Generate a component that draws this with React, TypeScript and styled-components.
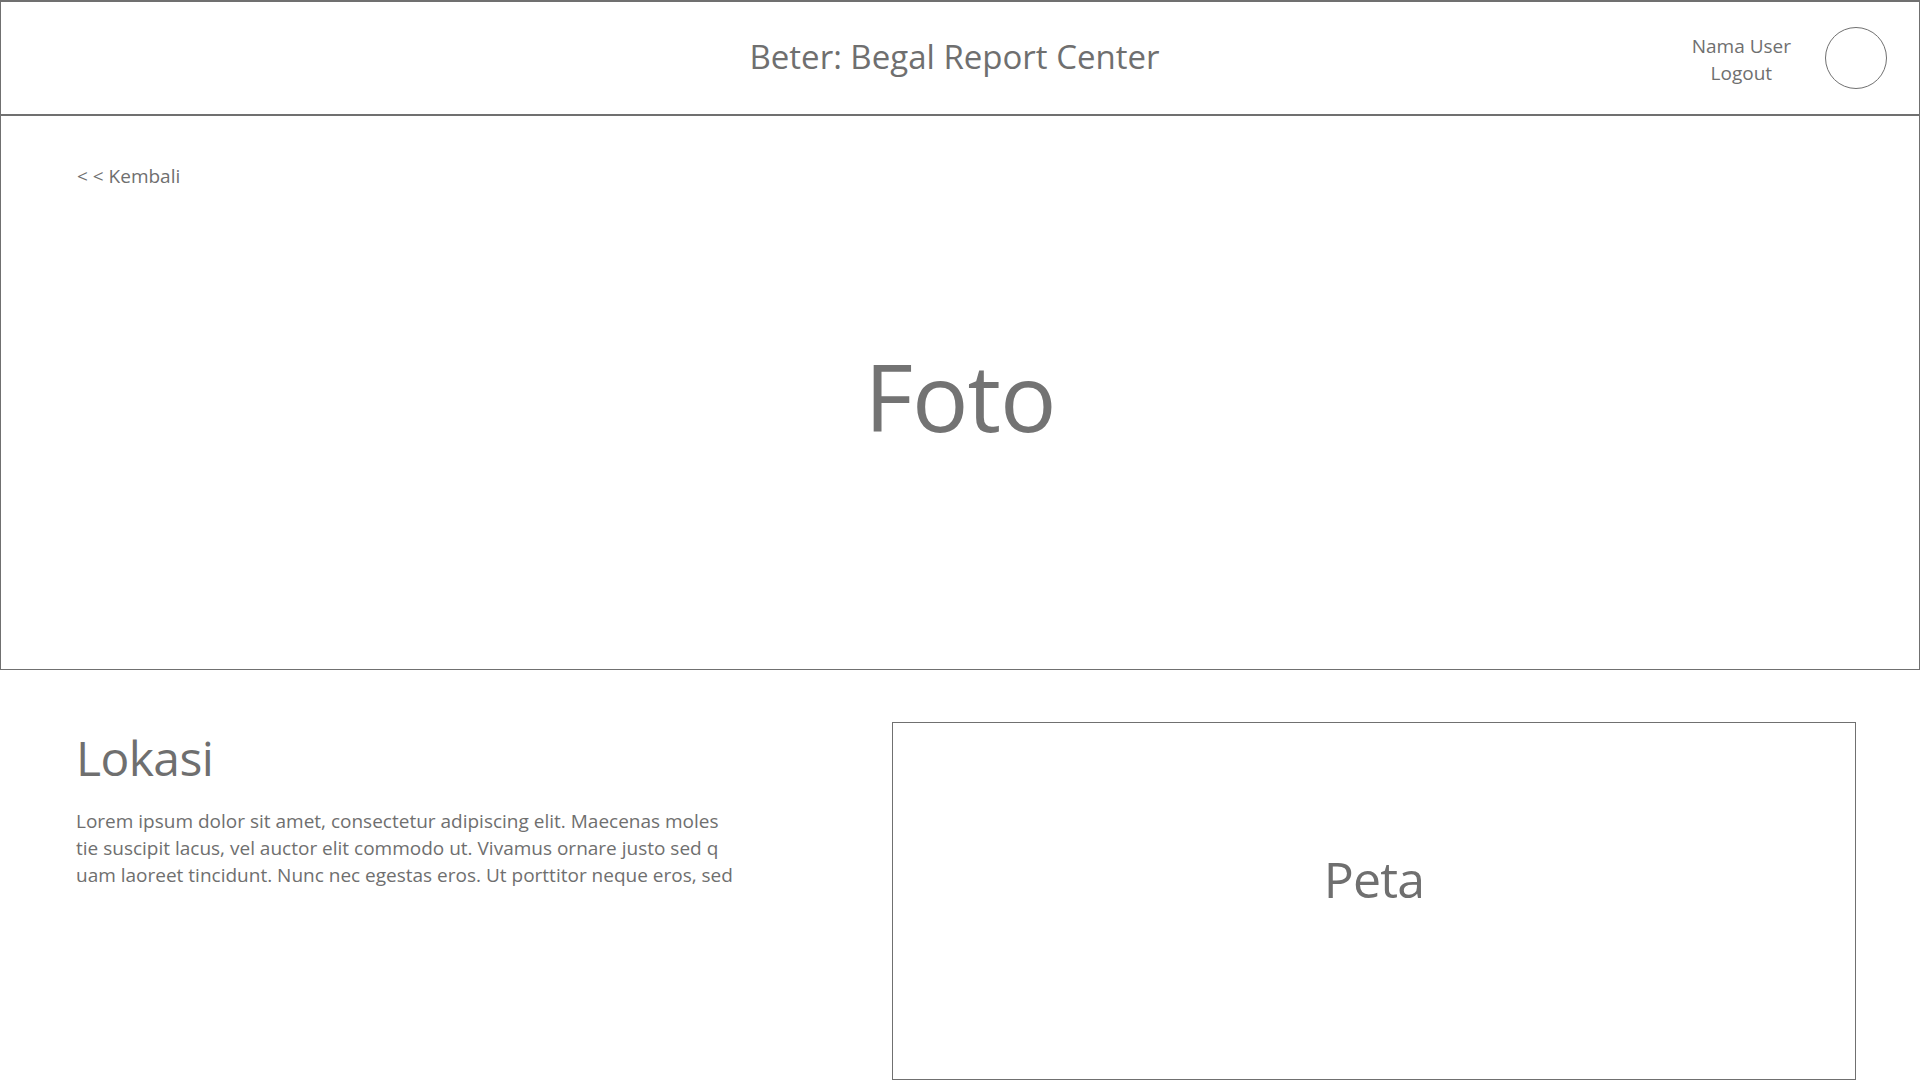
import React, { FC } from "react";
import styled, { createGlobalStyle } from "styled-components";

const ink = "#6f6f6f";
const line = "#707070";

const GlobalStyle = createGlobalStyle`
  html, body {
    margin: 0;
    padding: 0;
    background: #ffffff;
  }

  body {
    font-family: "Open Sans", "Noto Sans", sans-serif;
    color: ${ink};
  }

  * {
    box-sizing: border-box;
  }
`;

const loremLines = [
  "Lorem ipsum dolor sit amet, consectetur adipiscing elit. Maecenas moles",
  "tie suscipit lacus, vel auctor elit commodo ut. Vivamus ornare justo sed q",
  "uam laoreet tincidunt. Nunc nec egestas eros. Ut porttitor neque eros, sed",
];

const App: FC = () => {
  return (
    <Page>
      <GlobalStyle />
      <Header>
        <Title>Beter: Begal Report Center</Title>
        <UserArea>
          <UserLinks>
            <UserLink>Nama User</UserLink>
            <UserLink>Logout</UserLink>
          </UserLinks>
          <Avatar />
        </UserArea>
      </Header>

      <PhotoSection>
        <BackLink href="#">&lt; &lt; Kembali</BackLink>
        <PhotoLabel>Foto</PhotoLabel>
      </PhotoSection>

      <Details>
        <LocationColumn>
          <SectionTitle>Lokasi</SectionTitle>
          <Description>
            {loremLines.map((text) => (
              <DescriptionLine key={text}>{text}</DescriptionLine>
            ))}
          </Description>
        </LocationColumn>
        <MapBox>
          <MapLabel>Peta</MapLabel>
        </MapBox>
      </Details>
    </Page>
  );
};

const Page = styled.div`
  width: 1920px;
  height: 1080px;
  display: flex;
  flex-direction: column;
  overflow: hidden;
`;

const Header = styled.header`
  position: relative;
  height: 116px;
  flex-shrink: 0;
  display: flex;
  align-items: center;
  justify-content: center;
  border: 1px solid ${line};
  border-top-width: 2px;
  border-bottom-width: 2px;
`;

const Title = styled.h1`
  margin: 0;
  font-size: 33px;
  font-weight: 400;
  line-height: 1;
  padding-bottom: 4px;
  margin-left: -11px;
`;

const UserArea = styled.div`
  position: absolute;
  right: 32px;
  top: 0;
  bottom: 0;
  display: flex;
  align-items: center;
  gap: 34px;
`;

const UserLinks = styled.nav`
  display: flex;
  flex-direction: column;
  align-items: center;
  padding-top: 4px;
`;

const UserLink = styled.a`
  font-size: 19px;
  line-height: 27px;
  color: ${ink};
  text-decoration: none;
  cursor: pointer;
`;

const Avatar = styled.div`
  width: 62px;
  height: 62px;
  border-radius: 50%;
  border: 1px solid ${line};
`;

const PhotoSection = styled.section`
  height: 554px;
  flex-shrink: 0;
  display: flex;
  flex-direction: column;
  border: 1px solid ${line};
  border-top: none;
  padding: 48px 76px 0;
`;

const BackLink = styled.a`
  align-self: flex-start;
  font-size: 19px;
  line-height: 24px;
  color: ${ink};
  text-decoration: none;
`;

const PhotoLabel = styled.div`
  margin-top: 148px;
  text-align: center;
  font-size: 94px;
  line-height: 120px;
  letter-spacing: -1px;
  color: #737373;
`;

const Details = styled.section`
  flex: 1;
  display: flex;
  justify-content: space-between;
  padding: 52px 64px 0 76px;
  min-height: 0;
`;

const LocationColumn = styled.div`
  display: flex;
  flex-direction: column;
  padding-top: 6px;
`;

const SectionTitle = styled.h2`
  margin: 0;
  font-size: 48px;
  font-weight: 400;
  line-height: 60px;
  letter-spacing: -0.6px;
`;

const Description = styled.p`
  margin: 20px 0 0;
  font-size: 19px;
  line-height: 27px;
`;

const DescriptionLine = styled.span`
  display: block;
  white-space: nowrap;
`;

const MapBox = styled.div`
  width: 964px;
  height: 358px;
  flex-shrink: 0;
  display: flex;
  align-items: center;
  justify-content: center;
  border: 1px solid ${line};
`;

const MapLabel = styled.div`
  font-size: 50px;
  line-height: 1;
  letter-spacing: -0.8px;
  margin-bottom: 44px;
`;

export default App;
